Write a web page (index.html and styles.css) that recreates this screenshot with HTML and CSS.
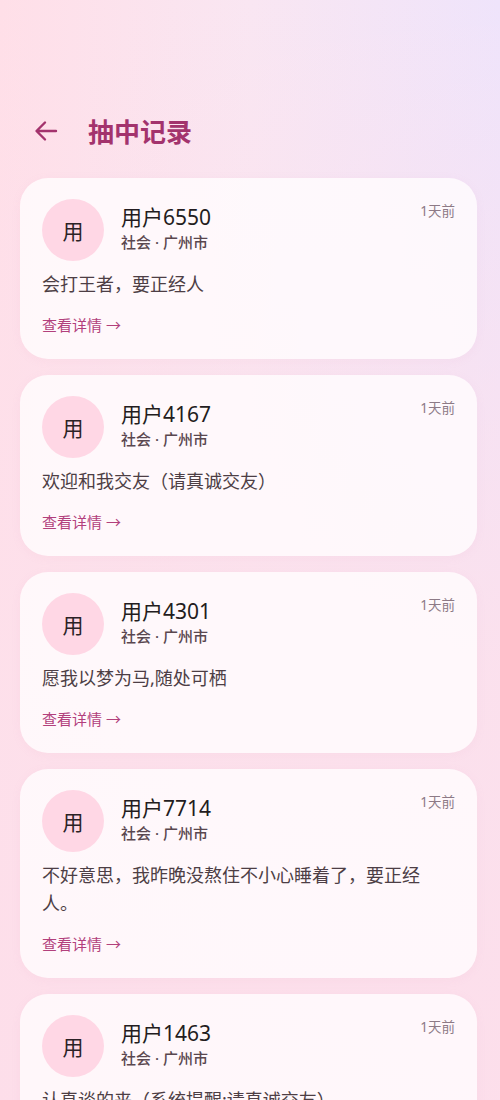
FILE: index.html
```html
<!DOCTYPE html>
<html lang="zh-CN">
<head>
<meta charset="utf-8">
<title>抽中记录</title>
<link rel="stylesheet" href="styles.css">
</head>
<body>
<div class="page">
  <header class="topbar">
    <button class="back" aria-label="返回">
      <svg width="24" height="22" viewBox="0 0 24 22" fill="none" stroke="currentColor" stroke-width="2.4" stroke-linecap="round" stroke-linejoin="round"><path d="M22 11H3M11 2.5L2.5 11L11 19.5"/></svg>
    </button>
    <h1 class="title">抽中记录</h1>
  </header>
  <main class="list">
    <article class="card">
      <div class="card-head">
        <div class="avatar">用</div>
        <div class="who"><div class="name">用户6550</div><div class="meta">社会 · 广州市</div></div>
        <div class="time">1天前</div>
      </div>
      <p class="msg">会打王者，要正经人</p>
      <a class="more">查看详情 →</a>
    </article>
    <article class="card">
      <div class="card-head">
        <div class="avatar">用</div>
        <div class="who"><div class="name">用户4167</div><div class="meta">社会 · 广州市</div></div>
        <div class="time">1天前</div>
      </div>
      <p class="msg">欢迎和我交友（请真诚交友）</p>
      <a class="more">查看详情 →</a>
    </article>
    <article class="card">
      <div class="card-head">
        <div class="avatar">用</div>
        <div class="who"><div class="name">用户4301</div><div class="meta">社会 · 广州市</div></div>
        <div class="time">1天前</div>
      </div>
      <p class="msg">愿我以梦为马,随处可栖</p>
      <a class="more">查看详情 →</a>
    </article>
    <article class="card">
      <div class="card-head">
        <div class="avatar">用</div>
        <div class="who"><div class="name">用户7714</div><div class="meta">社会 · 广州市</div></div>
        <div class="time">1天前</div>
      </div>
      <p class="msg">不好意思，我昨晚没熬住不小心睡着了，要正经人。</p>
      <a class="more">查看详情 →</a>
    </article>
    <article class="card">
      <div class="card-head">
        <div class="avatar">用</div>
        <div class="who"><div class="name">用户1463</div><div class="meta">社会 · 广州市</div></div>
        <div class="time">1天前</div>
      </div>
      <p class="msg">认真谈的来（系统提醒:请真诚交友）</p>
      <a class="more">查看详情 →</a>
    </article>
  </main>
</div>
</body>
</html>
```
FILE: styles.css
```css
* { box-sizing: border-box; }
html, body { margin: 0; padding: 0; }
body {
  font-family: "Noto Sans", "Noto Sans CJK SC", sans-serif;
  background:
    linear-gradient(to bottom, rgba(253, 222, 234, 0) 0%, rgba(253, 224, 235, 0.85) 60%, rgba(253, 222, 234, 0.95) 100%),
    linear-gradient(90deg, #ffdfe8 0%, #f9e6f2 50%, #efe4fb 100%);
  height: 1100px;
  overflow: hidden;
}
.page { padding: 107px 0 0; }
.topbar {
  height: 48px;
  display: flex;
  align-items: center;
  padding-left: 34px;
  margin-bottom: 23px;
}
.back {
  border: 0;
  background: none;
  padding: 0;
  color: #a3336d;
  display: flex;
  align-items: center;
  width: 24px;
  height: 24px;
}
.title {
  margin: 0 0 0 30px;
  font-family: "Noto Sans CJK SC", sans-serif;
  font-size: 26px;
  font-weight: 700;
  color: #a3336d;
  line-height: 1;
}
.list {
  display: flex;
  flex-direction: column;
  gap: 16px;
  padding: 0 23px 0 20px;
}
.card {
  background: rgba(255, 252, 254, 0.82);
  border-radius: 28px;
  padding: 21px 22px 24px;
  box-shadow: 0 2px 10px rgba(220, 150, 185, 0.08);
  display: flex;
  flex-direction: column;
}
.card-head {
  display: flex;
  align-items: center;
  height: 62px;
}
.avatar {
  width: 62px;
  height: 62px;
  border-radius: 50%;
  background: #ffd7e5;
  color: #2b2226;
  display: flex;
  align-items: center;
  justify-content: center;
  font-family: "Noto Sans CJK SC", sans-serif;
  font-size: 21px;
  flex: none;
}
.who {
  margin-left: 17px;
  flex: 1;
  display: flex;
  flex-direction: column;
  margin-top: -6px;
}
.name {
  font-size: 21px;
  line-height: 28px;
  color: #231c20;
}
.meta {
  margin-top: 1px;
  font-size: 15px;
  line-height: 20px;
  font-weight: 500;
  color: #5a474f;
}
.time {
  align-self: flex-start;
  margin-top: 1px;
  font-size: 13.5px;
  color: #8d7a86;
}
.msg {
  margin: 9px 0 0;
  font-size: 18px;
  line-height: 28px;
  color: #4d3e45;
}
.more {
  margin-top: 17px;
  font-size: 15px;
  line-height: 20px;
  color: #b2407c;
}
```
